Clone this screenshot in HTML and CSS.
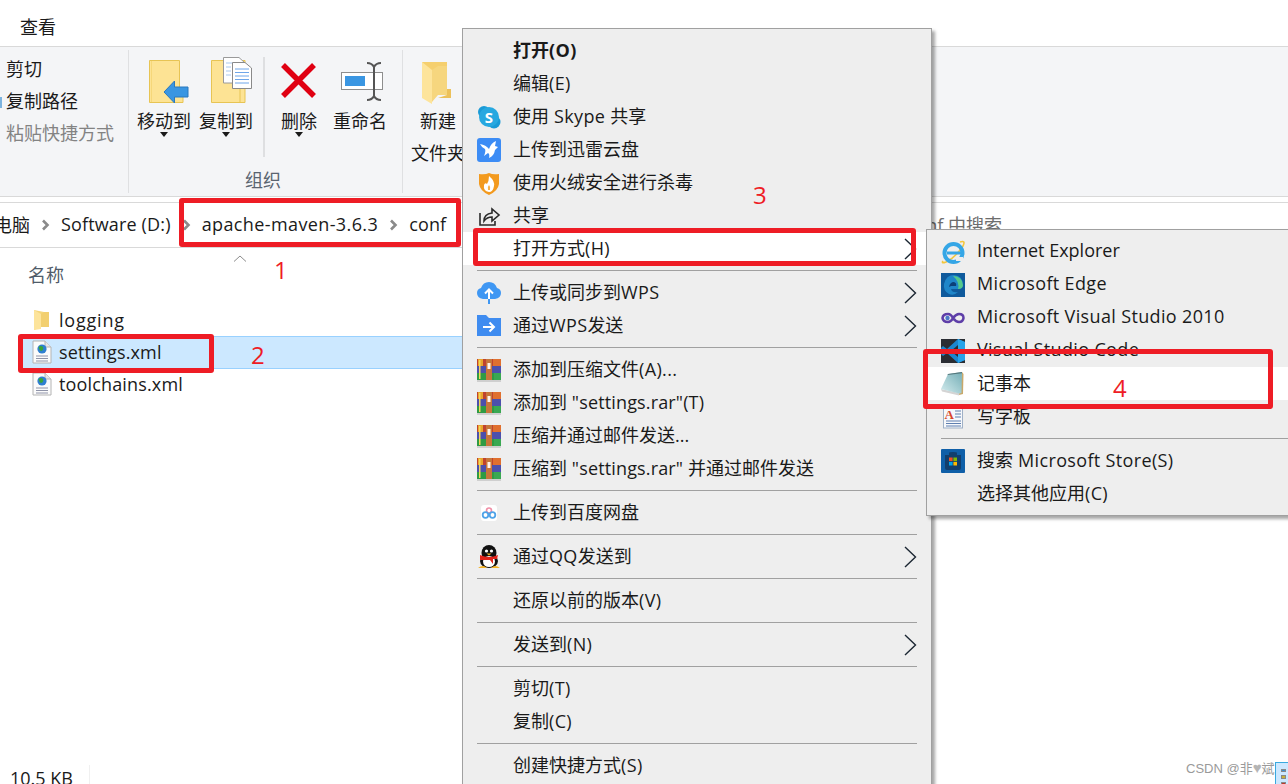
FILE: index.html
```html
<!DOCTYPE html>
<html lang="zh-CN">
<head>
    <meta charset="UTF-8">
    <title>conf - 文件资源管理器</title>
    <link rel="stylesheet" href="styles.css">
</head>
<body>
    <svg class="defs" width="0" height="0">
        <defs>
            <linearGradient id="pad" x1="0" y1="1" x2="1" y2="0">
                <stop offset="0" stop-color="#d5ecee"/>
                <stop offset="1" stop-color="#74aeb6"/>
            </linearGradient>
        </defs>
        <symbol id="rar" viewBox="0 0 24 24">
            <rect x="0" y="1" width="24" height="7" fill="#c0432f"/>
            <rect x="1" y="1" width="5" height="7" fill="#e8a52e"/>
            <rect x="16" y="1" width="8" height="7" fill="#e0702f"/>
            <rect x="0" y="8" width="24" height="7" fill="#4c50ac"/>
            <rect x="0" y="15" width="24" height="7" fill="#2e9b44"/>
            <rect x="17" y="15" width="7" height="7" fill="#3aa852"/>
            <rect x="2" y="2" width="1.500" height="19" fill="#f3d65c"/>
            <rect x="9" y="1" width="6" height="21" fill="#c8763a"/>
            <rect x="10.500" y="5" width="3" height="6" fill="#fff3ea"/>
            <rect x="0" y="22" width="24" height="2" fill="#cfcfcf"/>
        </symbol>
        <symbol id="chev" viewBox="0 0 14 24">
            <path d="M2 2 L12.500 12 L2 22" fill="none" stroke="#1c2733" stroke-width="1.400"/>
        </symbol>
        <symbol id="crumb" viewBox="0 0 9 12">
            <path d="M2 1.500 L6.500 6 L2 10.500" fill="none" stroke="#8a8a8a" stroke-width="2.600"/>
        </symbol>
        <symbol id="xml" viewBox="0 0 20 24">
            <path d="M1 1 H13 L19 7 V23 H1 Z" fill="#fbfbfb" stroke="#b4b4b4"/>
            <path d="M13 1 V7 H19" fill="#e6e6e6" stroke="#b4b4b4"/>
            <circle cx="10" cy="9" r="4.600" fill="#2f7fd0"/>
            <path d="M6.500 7 Q9 5 11 7 Q12 10 9 11 Q7 10 6.500 7 Z" fill="#3aa53a"/>
            <path d="M4 16 H16 M4 18.500 H16 M4 21 H16" stroke="#8f93a8"/>
        </symbol>
        <symbol id="folder" viewBox="0 0 17 22">
            <path d="M1 1 L11 3 H16 V18 H8 L1 21 Z" fill="#f5d67b"/>
            <path d="M1 1 L8 5 V20 L1 21 Z" fill="#fde49b"/>
            <path d="M8 5 L11 3 H16 V18 H8 Z" fill="#f2cf6f"/>
        </symbol>
    </svg>

    <div class="window">
        <div class="tabs"><span class="tab">查看</span></div>

        <div class="ribbon">
            <div class="group group-clip">
                <div class="clip-line">剪切</div>
                <div class="clip-line"><i class="clip-mark"></i>复制路径</div>
                <div class="clip-line muted">粘贴快捷方式</div>
            </div>
            <div class="group group-org">
                <div class="btn-row">
                    <div class="rib-btn">
                        <svg class="rib-icon" width="54" height="48" viewBox="0 0 54 48">
                            <path d="M12.500 3.500 H42.500 V30 L46 33 V45.500 H12.500 Z" fill="#fde394" stroke="#e7c454"/>
                            <path d="M14.500 4 V45" stroke="#f6d77a"/>
                            <path d="M27 35 L37.500 24 V30 H51 V40 H37.500 V46 Z" fill="#3a96e2" stroke="#2b78bd"/>
                        </svg>
                        <span>移动到</span><i class="caret"></i>
                    </div>
                    <div class="rib-btn">
                        <svg class="rib-icon" width="54" height="48" viewBox="0 0 54 48">
                            <path d="M12.500 3.500 H46 V45.500 H12.500 Z" fill="#fde394" stroke="#e7c454"/>
                            <path d="M41 32 V45" stroke="#e7c454"/>
                            <path d="M24.500 0.500 H40 L46 6 V26 H24.500 Z" fill="#fff" stroke="#9a9a9a"/>
                            <path d="M27 6 H38 M27 10 H32 M27 14 H32 M27 18 H32" stroke="#a9c8ee"/>
                            <path d="M33.500 5.500 H46 L52.500 11 V31.500 H33.500 Z" fill="#fff" stroke="#8a8a8a"/>
                            <path d="M36 12 H50 M36 15.500 H50 M36 19 H50 M36 22.500 H50 M36 26 H50" stroke="#6ea6ea"/>
                        </svg>
                        <span>复制到</span><i class="caret"></i>
                    </div>
                    <div class="rib-sep"></div>
                    <div class="rib-btn btn-del">
                        <svg class="rib-icon" width="38" height="48" viewBox="0 0 38 48">
                            <path d="M3 8 L34 39 M34 8 L3 39" stroke="#e00012" stroke-width="5.500"/>
                        </svg>
                        <span>删除</span><i class="caret"></i>
                    </div>
                    <div class="rib-btn btn-ren">
                        <svg class="rib-icon" width="54" height="48" viewBox="0 0 54 48">
                            <rect x="8.500" y="15.500" width="41" height="17" fill="#fff" stroke="#8e8e8e"/>
                            <rect x="12" y="19" width="20" height="10" fill="#3a96e2"/>
                            <path d="M34 6 Q39 6 41 10 Q43 6 48 6 M41 10 V39 M34 43 Q39 43 41 39 Q43 43 48 43" fill="none" stroke="#555" stroke-width="2"/>
                        </svg>
                        <span>重命名</span>
                    </div>
                </div>
                <div class="group-label">组织</div>
            </div>
            <div class="group group-new">
                <div class="rib-btn btn-new">
                    <svg class="rib-icon" width="54" height="48" viewBox="0 0 54 48">
                        <path d="M11 5 H36 V38 H19 Z" fill="#f5cf6e"/>
                        <path d="M11 5 L21 13 V47 L11 41 Z" fill="#fde49b"/>
                        <path d="M21 13 L27 9 H36 V38 H27 L21 45 Z" fill="#f6d67e"/>
                        <path d="M36 32 H40 V41 H27 L36 38 Z" fill="#ecc15a"/>
                    </svg>
                    <span>新建<br>文件夹</span>
                </div>
            </div>
        </div>

        <div class="address">
            <span class="crumb first">电脑</span>
            <svg class="crumb-arrow"><use href="#crumb"/></svg>
            <span class="crumb">Software (D:)</span>
            <svg class="crumb-arrow"><use href="#crumb"/></svg>
            <span class="crumb wide">apache-maven-3.6.3</span>
            <svg class="crumb-arrow"><use href="#crumb"/></svg>
            <span class="crumb">conf</span>
            <span class="search">在 conf 中搜索</span>
        </div>

        <div class="list-head">
            <span class="col-name">名称</span>
            <svg class="sort-up" width="14" height="7" viewBox="0 0 14 7"><path d="M1 6.500 L7 1 L13 6.500" fill="none" stroke="#8c8c8c"/></svg>
        </div>
        <div class="file-list">
            <div class="file">
                <svg class="file-icon" width="20" height="24" viewBox="0 0 20 24"><use href="#folder" x="1" y="1" width="17" height="22"/></svg>
                <span class="name-loose">logging</span>
            </div>
            <div class="file selected">
                <svg class="file-icon" width="20" height="24"><use href="#xml"/></svg>
                <span class="name">settings.xml</span>
            </div>
            <div class="file">
                <svg class="file-icon" width="20" height="24"><use href="#xml"/></svg>
                <span class="name">toolchains.xml</span>
            </div>
        </div>

        <div class="status">
            <span class="status-size">10.5 KB</span>
            <i class="status-div"></i>
        </div>
    </div>

    <!-- context menu -->
    <div class="menu main-menu">
        <div class="item strong"><span class="ico"></span><span>打开<span class="lat">(O)</span></span></div>
        <div class="item"><span class="ico"></span><span>编辑<span class="lat">(E)</span></span></div>
        <div class="item">
            <span class="ico"><svg width="24" height="24" viewBox="0 0 24 24">
                <circle cx="7" cy="7" r="6" fill="#1a9ad6"/><circle cx="17" cy="17" r="6.500" fill="#1a9ad6"/><circle cx="12" cy="12" r="10" fill="#27a8e0"/>
                <text x="12" y="17.500" class="ico-s">S</text>
            </svg></span><span>使用<span class="lat"> Skype </span>共享</span>
        </div>
        <div class="item">
            <span class="ico"><svg width="24" height="24" viewBox="0 0 24 24">
                <rect width="24" height="24" rx="3" fill="#3c8cf5"/>
                <path d="M3 6 Q9 7 12 11 Q14 5 19 3 L18 8 L21 9 L18 12 Q17 18 12 20 Q13 16 11 15 L7 18 Q9 13 8 11 Q5 10 3 6 Z" fill="#fff"/>
            </svg></span>上传到迅雷云盘
        </div>
        <div class="item">
            <span class="ico"><svg width="24" height="24" viewBox="0 0 24 24">
                <path d="M2 3 Q8 4 12 2 Q16 4 22 3 V13 Q21 20 12 24 Q3 20 2 13 Z" fill="#f39a1e"/>
                <path d="M12 5 Q18 10 17 15 Q16 21 12 21 Q6 20 7 14 Q8 11 10 13 Q12 10 12 5 Z" fill="#fff"/>
                <path d="M12 14 Q14 16 13 19 H11 Q10 16 12 14 Z" fill="#f6b24a"/>
            </svg></span>使用火绒安全进行杀毒
        </div>
        <div class="item">
            <span class="ico"><svg width="24" height="24" viewBox="0 0 24 24">
                <path d="M3 9 V21 H18 V17" fill="none" stroke="#2a2a2a" stroke-width="1.600"/>
                <path d="M7 17 Q7 10 15 9 V5 L22 11 L15 17 V13 Q10 13 7 17 Z" fill="none" stroke="#2a2a2a" stroke-width="1.600"/>
            </svg></span>共享
        </div>
        <div class="item active"><span class="ico"></span><span>打开方式<span class="lat">(H)</span></span><svg class="chev"><use href="#chev"/></svg></div>
        <div class="sep"></div>
        <div class="item">
            <span class="ico"><svg width="24" height="24" viewBox="0 0 24 24">
                <path d="M6 18 Q0 17 0 12 Q0 8 4 7 Q6 1 12 1 Q18 1 20 7 Q24 8 24 12 Q24 17 18 18 Z" fill="#3f97f3"/>
                <path d="M12 20 V9 M8 12.500 L12 8.500 L16 12.500" fill="none" stroke="#fff" stroke-width="2"/>
                <path d="M12 18 V23" stroke="#3f97f3" stroke-width="2"/>
            </svg></span><span>上传或同步到<span class="lat">WPS</span></span><svg class="chev"><use href="#chev"/></svg>
        </div>
        <div class="item">
            <span class="ico"><svg width="24" height="24" viewBox="0 0 24 24">
                <path d="M0 1 H9 L12 4 H24 V22 H0 Z" fill="#3f8cf0"/>
                <path d="M6 13 H17 M12.500 8.500 L17 13 L12.500 17.500" fill="none" stroke="#fff" stroke-width="2"/>
            </svg></span><span>通过<span class="lat">WPS</span>发送</span><svg class="chev"><use href="#chev"/></svg>
        </div>
        <div class="sep"></div>
        <div class="item"><span class="ico"><svg width="24" height="24"><use href="#rar"/></svg></span><span>添加到压缩文件<span class="lat">(A)...</span></span></div>
        <div class="item"><span class="ico"><svg width="24" height="24"><use href="#rar"/></svg></span><span>添加到<span class="name"> "settings.rar"(T)</span></span></div>
        <div class="item"><span class="ico"><svg width="24" height="24"><use href="#rar"/></svg></span>压缩并通过邮件发送...</div>
        <div class="item"><span class="ico"><svg width="24" height="24"><use href="#rar"/></svg></span><span>压缩到<span class="name"> "settings.rar" </span>并通过邮件发送</span></div>
        <div class="sep"></div>
        <div class="item">
            <span class="ico"><svg width="24" height="24" viewBox="0 0 24 24">
                <rect x="4" y="4" width="16" height="16" rx="3" fill="#fff"/>
                <circle cx="12" cy="9.500" r="2.500" fill="none" stroke="#ef8da5" stroke-width="1.600"/>
                <circle cx="8.500" cy="14" r="2.800" fill="none" stroke="#4fa3e8" stroke-width="1.800"/>
                <circle cx="15.500" cy="14" r="2.800" fill="none" stroke="#4fa3e8" stroke-width="1.800"/>
            </svg></span>上传到百度网盘
        </div>
        <div class="sep"></div>
        <div class="item">
            <span class="ico"><svg width="24" height="24" viewBox="0 0 24 24">
                <ellipse cx="12" cy="8" rx="7.500" ry="8" fill="#111"/>
                <ellipse cx="12" cy="16" rx="9" ry="7" fill="#111"/>
                <ellipse cx="12" cy="16.500" rx="6" ry="5.500" fill="#fff"/>
                <circle cx="9.500" cy="6" r="1.600" fill="#fff"/><circle cx="14.500" cy="6" r="1.600" fill="#fff"/>
                <path d="M3 10 Q12 14 21 10 L20 14 H16 V19 L13 15 H3 Z" fill="#e2231a"/>
                <path d="M9.500 8.500 H14.500 L12 10.500 Z" fill="#f4b223"/>
                <path d="M1 23 Q6 19 10 23 Z M14 23 Q18 19 23 23 Z" fill="#f4b223"/>
            </svg></span><span>通过<span class="lat">QQ</span>发送到</span><svg class="chev"><use href="#chev"/></svg>
        </div>
        <div class="sep"></div>
        <div class="item"><span class="ico"></span><span>还原以前的版本<span class="lat">(V)</span></span></div>
        <div class="sep"></div>
        <div class="item"><span class="ico"></span><span>发送到<span class="lat">(N)</span></span><svg class="chev"><use href="#chev"/></svg></div>
        <div class="sep"></div>
        <div class="item"><span class="ico"></span><span>剪切<span class="lat">(T)</span></span></div>
        <div class="item"><span class="ico"></span><span>复制<span class="lat">(C)</span></span></div>
        <div class="sep"></div>
        <div class="item"><span class="ico"></span><span>创建快捷方式<span class="lat">(S)</span></span></div>
    </div>

    <!-- open with submenu -->
    <div class="menu sub-menu">
        <div class="item">
            <span class="ico"><svg width="24" height="24" viewBox="0 0 24 24">
                <path d="M2 21 Q0 24 5 22 Q14 18 22 6 Q25 0 19 2" fill="none" stroke="#f3c63c" stroke-width="1.600"/>
                <circle cx="12.500" cy="13" r="9" fill="none" stroke="#35a6e6" stroke-width="4"/>
                <path d="M6 11.500 H20 V14.500 H6 Z" fill="#35a6e6"/>
                <path d="M15 17 H22 V21 H15 Z" fill="#ededed"/>
            </svg></span>Internet Explorer
        </div>
        <div class="item">
            <span class="ico"><svg width="24" height="24" viewBox="0 0 24 24">
                <rect width="24" height="24" fill="#0f5a9c"/>
                <path d="M3 11 Q5 2 13 2 Q22 3 22 12 Q22 16 17 16 H10 Q11 20 17 19 Q13 23 8 21 Q2 18 3 11 Z" fill="#1f86c9"/>
                <path d="M12 3 Q21 3 22 12 Q22 16 17 16 Q19 9 12 3 Z" fill="#55c98b"/>
                <path d="M8 14 Q9 9 13 9 Q16 10 15 13 H10 Z" fill="#0c3f78"/>
            </svg></span><span class="lat">Microsoft Edge</span>
        </div>
        <div class="item">
            <span class="ico"><svg width="24" height="24" viewBox="0 0 24 24">
                <path d="M7 8 Q2 8 1.500 12 Q2 16 7 16 Q10 16 12 12 Q15 8 18 8 Q22.500 8 22.500 12 Q22 16 18 16 Q15 16 12 12 Q10 8 7 8 Z" fill="none" stroke="#5e3ea8" stroke-width="2.500"/>
                <circle cx="6.500" cy="12" r="2.200" fill="#4a7ac9"/>
            </svg></span><span class="lat">Microsoft Visual Studio 2010</span>
        </div>
        <div class="item">
            <span class="ico"><svg width="24" height="24" viewBox="0 0 24 24">
                <rect width="24" height="24" fill="#2a2d33"/>
                <path d="M17 0 L24 3 V21 L17 24 L6 14 L2 17 L0 15 V9 L2 7 L6 10 Z" fill="#1b86cf"/>
                <path d="M17 6 L10 12 L17 18 Z" fill="#2a2d33"/>
                <path d="M17 0 L24 3 V21 L17 24 Z" fill="#27a3ea"/>
            </svg></span><span class="lat">Visual Studio Code</span>
        </div>
        <div class="item active">
            <span class="ico"><svg width="24" height="24" viewBox="0 0 24 24">
                <path d="M21 0 L22.500 2 L22 22 L18 23 Z" fill="#c9a86a"/>
                <path d="M0 17 L18 21 L18 23.500 L1 19.500 Z" fill="#d4d4d4"/>
                <path d="M7 2 L21 0 L20.500 21 L18 21.500 L0 17 Z" fill="url(#pad)"/>
                <path d="M7 2 L21 0 L21 1.200 L6.500 3 Z" fill="#55777c"/>
            </svg></span>记事本
        </div>
        <div class="item">
            <span class="ico"><svg width="24" height="24" viewBox="0 0 24 24">
                <rect x="2.500" y="1" width="19" height="22" fill="#f6f8fb" stroke="#9fb0c6"/>
                <text x="3.500" y="14" class="ico-a">A</text>
                <path d="M14 6 H20 M14 9 H20 M14 12 H20 M5 16 H20 M5 18.500 H20 M5 21 H20" stroke="#5f7fb0"/>
            </svg></span>写字板
        </div>
        <div class="sep"></div>
        <div class="item">
            <span class="ico"><svg width="24" height="24" viewBox="0 0 24 24">
                <rect width="24" height="24" rx="1" fill="#0f5fa8"/>
                <path d="M4 6 H8 V4 Q8 3 12 3 Q16 3 16 4 V6 H20 V19 Q20 21 18 21 H6 Q4 21 4 19 Z" fill="#123f6d"/>
                <rect x="8" y="8.500" width="3.600" height="3.600" fill="#f25022"/>
                <rect x="12.400" y="8.500" width="3.600" height="3.600" fill="#7fba00"/>
                <rect x="8" y="12.900" width="3.600" height="3.600" fill="#00a4ef"/>
                <rect x="12.400" y="12.900" width="3.600" height="3.600" fill="#ffb900"/>
            </svg></span><span>搜索<span class="lat"> Microsoft Store(S)</span></span>
        </div>
        <div class="item"><span class="ico"></span><span>选择其他应用<span class="lat">(C)</span></span></div>
    </div>

    <!-- annotations -->
    <div class="mark mark-1"></div>
    <div class="mark mark-2"></div>
    <div class="mark mark-3"></div>
    <div class="mark mark-4"></div>
    <span class="num num-1">1</span>
    <span class="num num-2">2</span>
    <span class="num num-3">3</span>
    <span class="num num-4">4</span>

    <div class="watermark">CSDN @非<span class="heart">♥</span>斌</div>
    <div class="tray"><i class="t1"></i><i class="t2"></i><i class="t3"></i></div>
</body>
</html>
```

FILE: styles.css
```css
* {
    margin: 0;
    padding: 0;
    box-sizing: border-box;
}

html, body {
    height: 784px;
    overflow: hidden;
}

body {
    position: relative;
    background-color: #fff;
    color: #1a1a1a;
    font-family: "Open Sans", "Noto Sans CJK SC", sans-serif;
    font-size: 18px;
}

.defs {
    position: absolute;
}

.lat {
    letter-spacing: 0.35px;
}

.name {
    letter-spacing: 0.15px;
}

.name-loose {
    letter-spacing: 0.8px;
}

.window {
    display: flex;
    flex-direction: column;
    height: 784px;
    overflow: hidden;
}

/* tab strip */
.tabs {
    height: 47px;
    padding: 14px 0 0 20px;
    line-height: 26px;
    border-bottom: 1px solid #d9d9d9;
}

/* ribbon */
.ribbon {
    display: flex;
    height: 150px;
    background-color: #f4f5f7;
    border-bottom: 1px solid #d9d9d9;
    white-space: nowrap;
}

.group {
    position: relative;
    margin: 3px 0;
    border-right: 1px solid #dfe0e2;
}

.group-clip {
    width: 129px;
    padding: 3px 0 0 6px;
}

.clip-line {
    height: 32px;
    line-height: 32px;
}

.clip-line.muted {
    color: #838383;
}

.clip-mark {
    position: absolute;
    left: 0;
    top: 47px;
    width: 2px;
    height: 11px;
    background-color: #7db4e0;
}

.group-org {
    display: flex;
    flex-direction: column;
    width: 274px;
    padding-left: 8px;
}

.btn-row {
    display: flex;
    height: 128px;
}

.rib-btn {
    display: flex;
    flex-direction: column;
    align-items: center;
    width: 54px;
    margin-right: 8px;
    padding-top: 7px;
    line-height: 32px;
    text-align: center;
}

.rib-icon {
    flex: none;
    display: block;
}

.caret {
    width: 0;
    height: 0;
    margin-top: -5px;
    border: 4px solid transparent;
    border-top: 5px solid #1a1a1a;
    border-bottom: 0;
}

.rib-sep {
    width: 2px;
    height: 100px;
    margin: 7px 15px 0 2px;
    background-color: #dedfe1;
}

.btn-del {
    width: 38px;
    margin-right: 15px;
}

.group-label {
    margin-top: -3px;
    padding-right: 13px;
    line-height: 26px;
    text-align: center;
    color: #5a6470;
}

.group-new {
    flex: 1;
    padding-left: 8px;
    border-right: 0;
}

/* address bar */
.address {
    display: flex;
    align-items: center;
    height: 46px;
    margin-top: 5px;
    padding-bottom: 2px;
    border-top: 1px solid #d9d9d9;
    border-bottom: 1px solid #d9d9d9;
    white-space: nowrap;
}

.crumb {
    letter-spacing: 0.15px;
}

.crumb.first {
    margin-left: -6px;
    letter-spacing: 0;
}

.crumb.wide {
    letter-spacing: 0.39px;
}

.crumb-arrow {
    flex: none;
    width: 9px;
    height: 12px;
    margin: 2px 11px 0;
}

.search {
    margin-left: auto;
    margin-right: 286px;
    color: #6d6d6d;
}

/* file list */
.list-head {
    display: flex;
    height: 56px;
    padding-left: 28px;
}

.col-name {
    margin-top: 14px;
    line-height: 26px;
    color: #4f5b69;
}

.sort-up {
    margin: 7px 0 0 169px;
}

.file {
    display: flex;
    align-items: center;
    height: 32px;
    margin-left: 20px;
    padding-left: 12px;
}

.file.selected {
    height: 33px;
    margin-bottom: -1px;
    padding-bottom: 1px;
    background-color: #cce8ff;
    border-top: 1px solid #99d1ff;
    border-bottom: 1px solid #99d1ff;
}

.file-icon {
    flex: none;
    margin-right: 7px;
}

.status {
    display: flex;
    align-items: center;
    height: 26px;
    margin-top: auto;
    margin-bottom: -7px;
    padding-left: 10px;
}

.status-size {
    width: 79px;
}

.status-div {
    width: 1px;
    height: 26px;
    background-color: #f0f0f0;
}

/* context menus */
.menu {
    position: absolute;
    padding: 5px 0;
    background-color: #eeeeee;
    border: 1px solid #a0a0a0;
    box-shadow: 3px 3px 3px rgba(0, 0, 0, 0.35);
    white-space: nowrap;
}

.main-menu {
    left: 462px;
    top: 28px;
    width: 470px;
}

.sub-menu {
    left: 926px;
    top: 229px;
    width: 380px;
}

.item {
    display: flex;
    align-items: center;
    height: 33px;
    padding-left: 14px;
    padding-bottom: 4px;
}

.item.strong {
    font-weight: bold;
}

.item.active {
    background-color: #fff;
}

.ico {
    flex: none;
    width: 24px;
    height: 24px;
    margin-top: 4px;
    margin-right: 12px;
}

.ico svg {
    display: block;
}

.ico-s {
    font-family: "Open Sans", sans-serif;
    font-size: 15px;
    font-weight: bold;
    fill: #fff;
    text-anchor: middle;
}

.ico-a {
    font-family: "Liberation Serif", serif;
    font-size: 13px;
    font-weight: bold;
    fill: #d9472b;
}

.chev {
    flex: none;
    width: 14px;
    height: 24px;
    margin-left: auto;
    margin-top: 4px;
    margin-right: 14px;
}

.sep {
    height: 1px;
    margin: 5px 14px;
    background-color: #a0a0a0;
}

.sub-menu .sep {
    margin-right: 0;
}

/* red annotation boxes */
.mark {
    position: absolute;
    border: 5px solid #ee1c25;
    border-radius: 3px;
}

.mark-1 { left: 179px; top: 198px; width: 282px; height: 49px; }
.mark-2 { left: 18px; top: 334px; width: 196px; height: 39px; }
.mark-3 { left: 473px; top: 228px; width: 443px; height: 38px; }
.mark-4 { left: 923px; top: 349px; width: 350px; height: 60px; }

.num {
    position: absolute;
    color: #ee1c25;
    font-size: 24px;
    line-height: 30px;
}

.num-1 { left: 274px; top: 255px; }
.num-2 { left: 251px; top: 340px; }
.num-3 { left: 753px; top: 180px; }
.num-4 { left: 1113px; top: 373px; }

.watermark {
    position: absolute;
    left: 1186px;
    top: 760px;
    font-family: "Liberation Sans", "Noto Sans CJK SC", sans-serif;
    font-size: 13px;
    line-height: 18px;
    color: #9a9a9a;
}

.heart {
    color: #b5b5b5;
    font-size: 15px;
    line-height: 14px;
}

.tray {
    position: absolute;
    left: 1275px;
    top: 762px;
    display: flex;
    flex-direction: column;
    align-items: center;
    gap: 3px;
    width: 16px;
    height: 24px;
    padding-top: 6px;
    background-color: #cce8ff;
    border: 1px solid #3aa9de;
}

.tray i {
    width: 5px;
    height: 4px;
    border: 1px solid #888;
}

.tray .t1 { background-color: #3f8fd0; }
.tray .t2 { background-color: #c8b13a; }
.tray .t3 { background-color: #c0392b; }
```
